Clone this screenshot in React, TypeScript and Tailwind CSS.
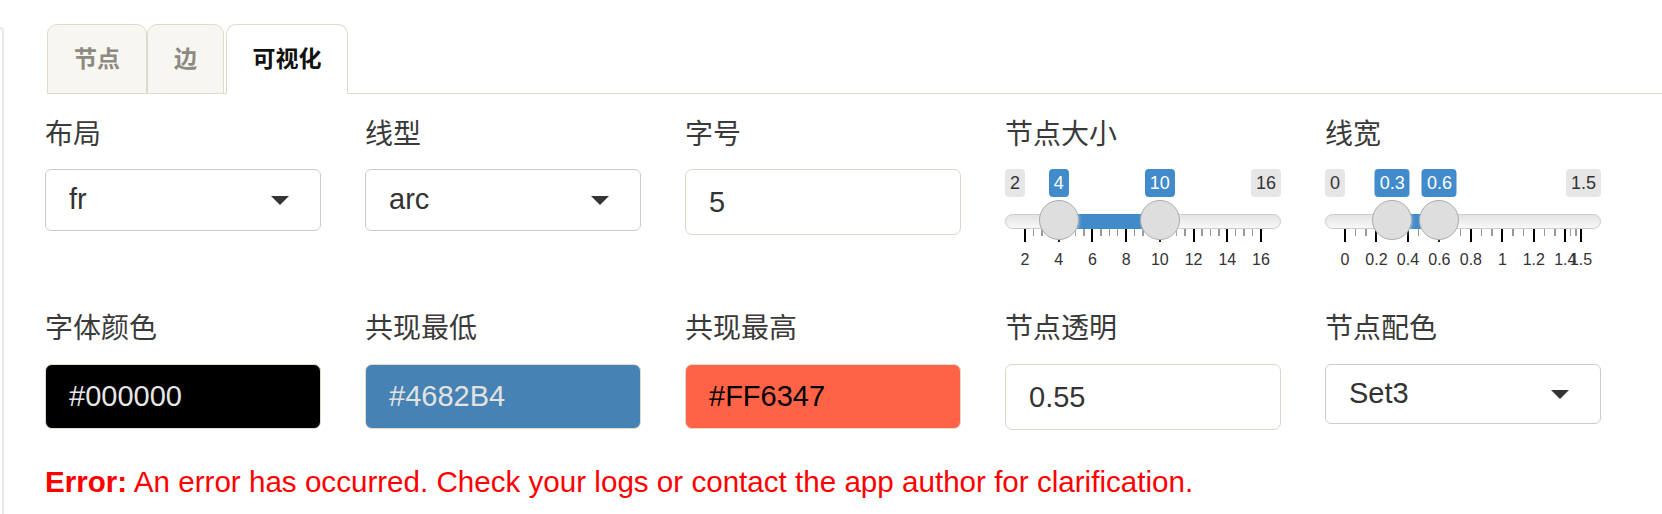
import React from 'react';

const tabs = [
  { name: '节点', w: 'w-[100px]', active: false },
  { name: '边', w: 'w-[77px]', active: false },
  { name: '可视化', w: 'w-[122px] ml-[2px]', active: true },
];

type SliderProps = {
  min: number;
  max: number;
  from: number;
  to: number;
  bigs: number[];
  smallPer: number;
};

const RangeSlider = ({ min, max, from, to, bigs, smallPer }: SliderProps) => {
  const pos = (v: number) => 20 + ((v - min) / (max - min)) * 236;

  const smalls: number[] = [];
  for (let i = 1; i < bigs.length; i++) {
    const a = bigs[i - 1];
    const b = bigs[i];
    for (let k = 1; k <= smallPer; k++) smalls.push(a + ((b - a) * k) / (smallPer + 1));
  }

  return (
    <div className="relative h-[102px] w-full">
      <span className="absolute left-0 top-0 h-[28px] rounded-[4px] bg-[#e6e6e6] px-[5px] text-[18px] leading-[28px] text-[#333]">
        {min}
      </span>
      <span className="absolute right-0 top-0 h-[28px] rounded-[4px] bg-[#e6e6e6] px-[5px] text-[18px] leading-[28px] text-[#333]">
        {max}
      </span>
      <span
        className="absolute top-0 h-[28px] -translate-x-1/2 rounded-[4px] bg-[#428bca] px-[5px] text-[18px] leading-[28px] text-white"
        style={{ left: pos(from) }}
      >
        {from}
      </span>
      <span
        className="absolute top-0 h-[28px] -translate-x-1/2 rounded-[4px] bg-[#428bca] px-[5px] text-[18px] leading-[28px] text-white"
        style={{ left: pos(to) }}
      >
        {to}
      </span>

      {/* grid */}
      {smalls.map((v, i) => (
        <span
          key={'s' + i}
          className="absolute top-[60px] h-[7px] w-[1.5px] bg-[#999]"
          style={{ left: pos(v) - 0.75 }}
        />
      ))}
      {bigs.map((v) => (
        <React.Fragment key={v}>
          <span className="absolute top-[60px] h-[13px] w-[2px] bg-black" style={{ left: pos(v) - 1 }} />
          <span
            className="absolute top-[80px] -translate-x-1/2 whitespace-nowrap text-[16px] leading-[22px] text-[#333]"
            style={{ left: pos(v) }}
          >
            {v}
          </span>
        </React.Fragment>
      ))}

      <div className="absolute left-0 right-0 top-[45px] h-[15px] rounded-full border border-[#cccccc] bg-linear-to-b from-[#e3e3e3] to-[#f8f8f8]" />
      <div
        className="absolute top-[45px] h-[15px] bg-[#428bca]"
        style={{ left: pos(from), width: pos(to) - pos(from) }}
      />
      <div
        className="absolute top-[31px] h-[40px] w-[40px] rounded-full border border-[#ababab] bg-[#dedede] shadow-[1px_1px_3px_rgba(255,255,255,0.3)]"
        style={{ left: pos(from) - 20 }}
      />
      <div
        className="absolute top-[31px] h-[40px] w-[40px] rounded-full border border-[#ababab] bg-[#dedede] shadow-[1px_1px_3px_rgba(255,255,255,0.3)]"
        style={{ left: pos(to) - 20 }}
      />
    </div>
  );
};

const Select = ({ value, h }: { value: string; h: string }) => (
  <div
    className={`flex ${h} items-center justify-between rounded-[6px] border border-[#cccccc] bg-white pl-[23px] pr-[31px] text-[29px] text-[#333]`}
  >
    <span>{value}</span>
    <span className="h-0 w-0 border-x-[9px] border-t-[9px] border-x-transparent border-t-[#333]" />
  </div>
);

const TextBox = ({ value }: { value: string }) => (
  <input
    readOnly
    value={value}
    className="h-[66px] w-full rounded-[7px] border border-[#ded6c8] bg-white px-[23px] text-[29px] text-[#333] outline-none"
  />
);

const ColorBox = ({ value, bg, fg }: { value: string; bg: string; fg: string }) => (
  <div
    className={`flex h-[65px] items-center rounded-[7px] border border-[#e2dccf] px-[23px] text-[29px] ${bg} ${fg}`}
  >
    {value}
  </div>
);

const Label = ({ children }: { children: React.ReactNode }) => (
  <div className="h-[34px] text-[28px] leading-[36px] text-[#3a3a3a]">{children}</div>
);

export default function App() {
  return (
    <div className="flex h-[514px] w-full overflow-hidden bg-white font-['Liberation_Sans','Noto_Sans_CJK_SC',sans-serif]">
      <div className="mt-[27px] h-full w-[4px] shrink-0 rounded-tr-[8px] border-r-2 border-t-2 border-[#e9e9e9]" />

      <div className="ml-[41px] flex flex-1 flex-col pt-[24px]">
        {/* tabs */}
        <div className="ml-[2px] flex border-b border-[#e0dacd]">
          {tabs.map((t) => (
            <div
              key={t.name}
              className={`${t.w} -mb-px flex h-[70px] items-center justify-center rounded-t-[10px] border border-[#e0dacd] text-[23px] font-semibold ${
                t.active ? 'border-b-white bg-white text-[#111]' : 'bg-[#f8f6f1] text-[#8d8a83]'
              }`}
            >
              {t.name}
            </div>
          ))}
        </div>

        {/* row 1 */}
        <div className="mt-[23px] flex h-[194px] gap-[44px]">
          <div className="flex w-[276px] flex-col">
            <Label>布局</Label>
            <div className="mt-[18px]">
              <Select value="fr" h="h-[62px]" />
            </div>
          </div>
          <div className="flex w-[276px] flex-col">
            <Label>线型</Label>
            <div className="mt-[18px]">
              <Select value="arc" h="h-[62px]" />
            </div>
          </div>
          <div className="flex w-[276px] flex-col">
            <Label>字号</Label>
            <div className="mt-[18px]">
              <TextBox value="5" />
            </div>
          </div>
          <div className="flex w-[276px] flex-col">
            <Label>节点大小</Label>
            <div className="mt-[18px]">
              <RangeSlider min={2} max={16} from={4} to={10} bigs={[2, 4, 6, 8, 10, 12, 14, 16]} smallPer={3} />
            </div>
          </div>
          <div className="flex w-[276px] flex-col">
            <Label>线宽</Label>
            <div className="mt-[18px]">
              <RangeSlider
                min={0}
                max={1.5}
                from={0.3}
                to={0.6}
                bigs={[0, 0.2, 0.4, 0.6, 0.8, 1, 1.2, 1.4, 1.5]}
                smallPer={2}
              />
            </div>
          </div>
        </div>

        {/* row 2 */}
        <div className="flex gap-[44px]">
          <div className="flex w-[276px] flex-col">
            <Label>字体颜色</Label>
            <div className="mt-[19px]">
              <ColorBox value="#000000" bg="bg-black" fg="text-[#e6e6e6]" />
            </div>
          </div>
          <div className="flex w-[276px] flex-col">
            <Label>共现最低</Label>
            <div className="mt-[19px]">
              <ColorBox value="#4682B4" bg="bg-[#4682b4]" fg="text-[#e2e2e2]" />
            </div>
          </div>
          <div className="flex w-[276px] flex-col">
            <Label>共现最高</Label>
            <div className="mt-[19px]">
              <ColorBox value="#FF6347" bg="bg-[#ff6347]" fg="text-black" />
            </div>
          </div>
          <div className="flex w-[276px] flex-col">
            <Label>节点透明</Label>
            <div className="mt-[19px]">
              <TextBox value="0.55" />
            </div>
          </div>
          <div className="flex w-[276px] flex-col">
            <Label>节点配色</Label>
            <div className="mt-[19px]">
              <Select value="Set3" h="h-[60px]" />
            </div>
          </div>
        </div>

        <div className="mt-[35px] text-[29.6px] leading-[33px] text-[#ff0000]">
          <span className="font-bold">Error:</span> An error has occurred. Check your logs or contact the app author for
          clarification.
        </div>
      </div>
    </div>
  );
}
